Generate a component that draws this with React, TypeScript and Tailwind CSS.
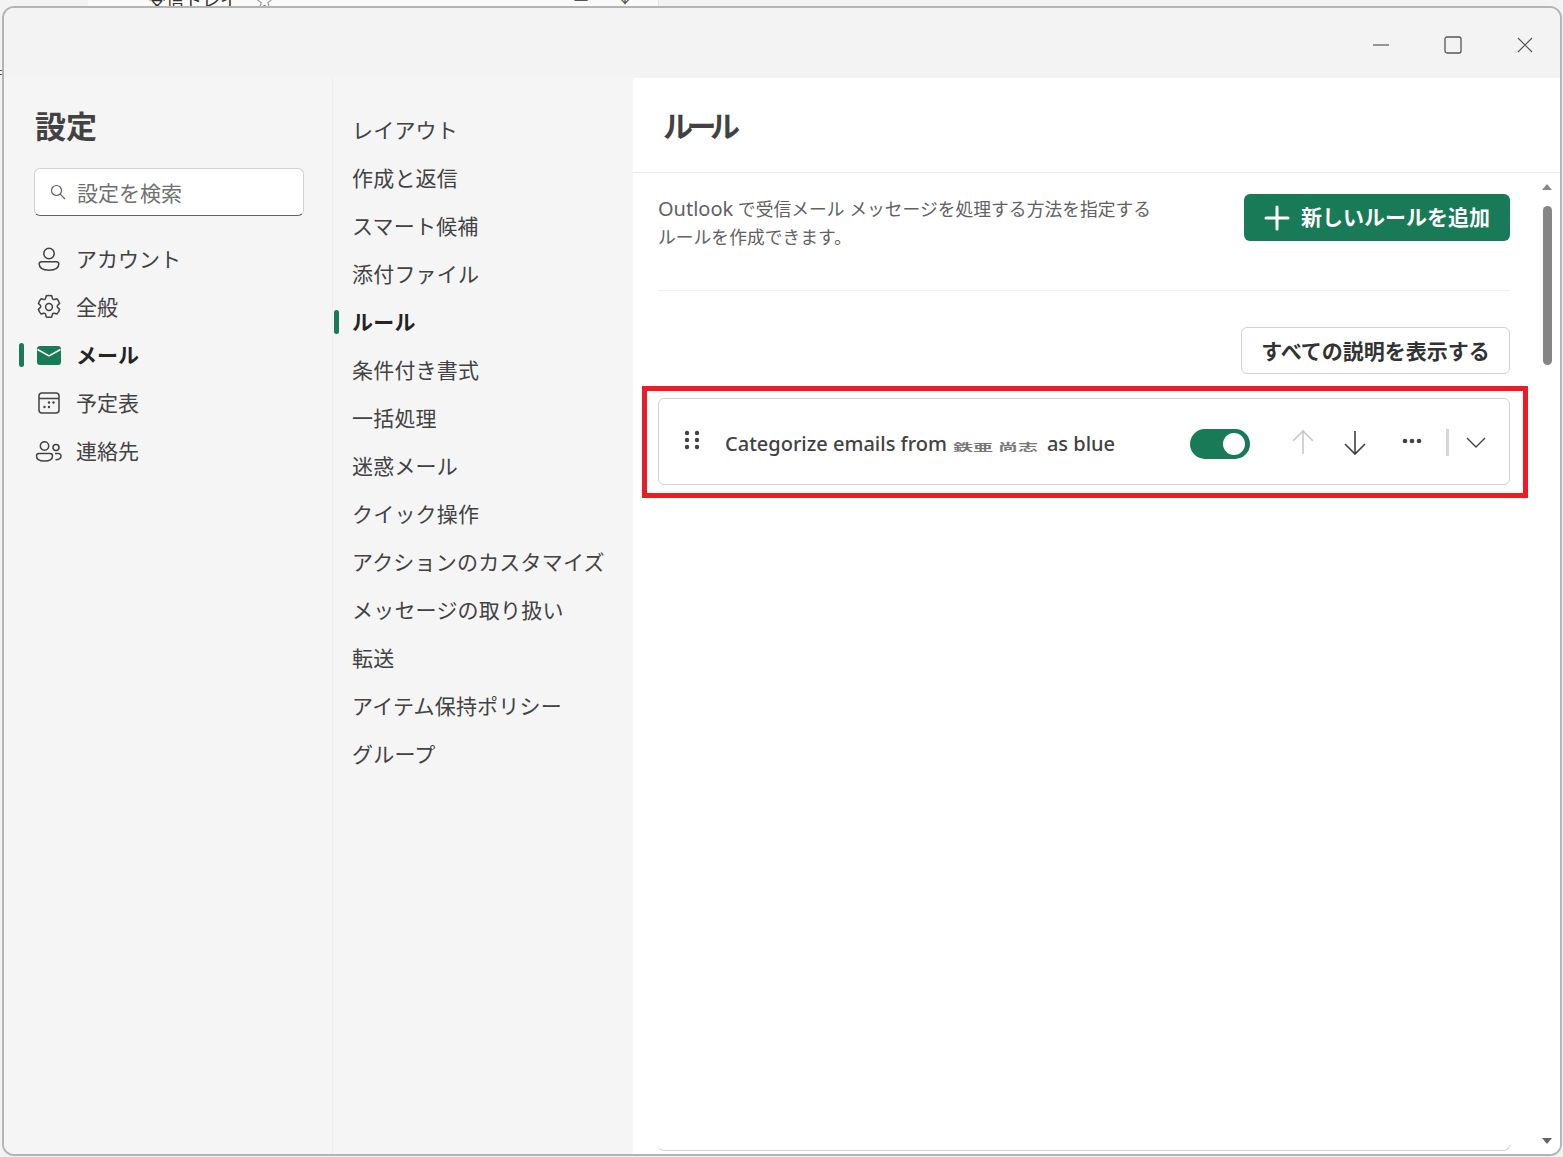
const font = "[font-family:'Noto_Sans','Noto_Sans_CJK_JP',sans-serif]";

function PersonIcon() {
  return (
    <svg width="26" height="26" viewBox="0 0 26 26" fill="none" stroke="#424242" strokeWidth="1.5">
      <circle cx="13" cy="7.5" r="5.2" />
      <path d="M5.5 15.7h15a2.3 2.3 0 0 1 2.3 2.3c0 4-3.8 6.2-9.8 6.2S3.2 22 3.2 18a2.3 2.3 0 0 1 2.3-2.3Z" />
    </svg>
  );
}

function GearIcon() {
  return (
    <svg width="26" height="26" viewBox="0 0 26 26" fill="none" stroke="#424242" strokeWidth="1.5" strokeLinejoin="round">
      <circle cx="13" cy="13" r="3.4" />
      <path d="M10.3 1.8c1.8-.4 3.6-.4 5.4 0l.7 2.6c.2.8 1.1 1.3 1.9 1.1l2.6-.7c1.2 1.3 2.1 2.9 2.7 4.6l-1.9 1.9c-.6.6-.6 1.6 0 2.2l1.9 1.9c-.6 1.7-1.5 3.3-2.7 4.6l-2.6-.7c-.8-.2-1.7.3-1.9 1.1l-.7 2.6c-1.8.4-3.6.4-5.4 0l-.7-2.6c-.2-.8-1.1-1.3-1.9-1.1l-2.6.7c-1.2-1.3-2.1-2.9-2.7-4.6l1.9-1.9c.6-.6.6-1.6 0-2.2L2.4 9.4c.6-1.7 1.5-3.3 2.7-4.6l2.6.7c.8.2 1.7-.3 1.9-1.1l.7-2.6Z" />
    </svg>
  );
}

function MailIcon() {
  return (
    <svg width="26" height="26" viewBox="0 0 26 26" fill="none">
      <rect x="1" y="4" width="24" height="19" rx="3" fill="#187a57" />
      <path d="M1.5 7.5 13 14l11.5-6.5" stroke="#fff" strokeWidth="1.5" />
    </svg>
  );
}

function CalendarIcon() {
  return (
    <svg width="26" height="26" viewBox="0 0 26 26" fill="none">
      <rect x="3" y="3" width="20" height="20" rx="3" stroke="#424242" strokeWidth="1.5" />
      <path d="M3 8.5h20" stroke="#424242" strokeWidth="1.5" />
      <g fill="#424242">
        <circle cx="13" cy="12.5" r="1.2" />
        <circle cx="17.5" cy="12.5" r="1.2" />
        <circle cx="8.5" cy="17" r="1.2" />
        <circle cx="13" cy="17" r="1.2" />
      </g>
    </svg>
  );
}

function PeopleIcon() {
  return (
    <svg width="28" height="26" viewBox="0 0 28 26" fill="none" stroke="#424242" strokeWidth="1.5">
      <circle cx="9.5" cy="8" r="4.2" />
      <circle cx="21" cy="9.5" r="3" />
      <path d="M4 15.5h11a2.5 2.5 0 0 1 2.5 2.5c0 3.4-3.2 5-8 5s-8-1.6-8-5A2.5 2.5 0 0 1 4 15.5Z" />
      <path d="M20 15.5h3.5a2.5 2.5 0 0 1 2.5 2.5c0 2.5-2.4 3.7-5.5 3.7" />
    </svg>
  );
}

const accounts = [
  { label: "アカウント", icon: PersonIcon },
  { label: "全般", icon: GearIcon },
  { label: "メール", icon: MailIcon, active: true },
  { label: "予定表", icon: CalendarIcon },
  { label: "連絡先", icon: PeopleIcon },
];

const mailSections = [
  "レイアウト",
  "作成と返信",
  "スマート候補",
  "添付ファイル",
  "ルール",
  "条件付き書式",
  "一括処理",
  "迷惑メール",
  "クイック操作",
  "アクションのカスタマイズ",
  "メッセージの取り扱い",
  "転送",
  "アイテム保持ポリシー",
  "グループ",
];

export default function App() {
  return (
    <div className={`${font} relative w-[1563px] h-[1157px] overflow-hidden bg-[#f3f3f3] pl-[2px] pt-[6px] pr-[1px] pb-px`}>
      {/* mailbox window peeking out behind the dialog */}
      <div className="absolute left-[88px] top-0 w-[571px] h-[6px] bg-[#fafafa] overflow-hidden border-r border-[#e0e0e0]">
        <span className="absolute left-[60px] -top-[14px] text-[18px] leading-[28px] text-[#333] whitespace-nowrap">受信トレイ</span>
        <span className="absolute left-[166px] -top-[14px] text-[21px] leading-[28px] text-[#777]">☆</span>
        <span className="absolute left-[484px] -top-[16px] text-[18px] leading-[24px] text-[#555]">≡</span>
        <span className="absolute left-[528px] -top-[16px] text-[18px] leading-[24px] text-[#555]">↓</span>
      </div>
      <span className="absolute left-0 top-[70px] w-[2px] h-[5px] border-y border-[#555]" />

      <div className="relative flex flex-col h-full border-2 border-[#b4b4b4] rounded-[12px] overflow-hidden bg-white">
        <div className="flex items-center justify-end h-[70px] pt-[4px] shrink-0 bg-[#f3f3f3]">
          <svg width="18" height="18" viewBox="0 0 18 18" fill="none" stroke="#777" strokeWidth="1.5" className="mr-[54px]">
            <path d="M1 9h16" />
          </svg>
          <svg width="18" height="18" viewBox="0 0 18 18" fill="none" stroke="#555" strokeWidth="1.3" className="mr-[54px]">
            <rect x="1" y="1" width="16" height="16" rx="2" />
          </svg>
          <svg width="18" height="18" viewBox="0 0 18 18" fill="none" stroke="#555" strokeWidth="1.2" className="mr-[26px]">
            <path d="M2 2l14 14M16 2 2 16" />
          </svg>
        </div>

        <div className="flex flex-1 min-h-0">
          <nav className="w-[329px] shrink-0 bg-[#f5f5f5] border-r border-[#eeeeee] pt-[25px]">
            <h1 className="pl-[31px] text-[31px] leading-[46px] font-bold text-[#424242]">設定</h1>
            <div className="ml-[30px] mt-[19px] flex items-center w-[270px] h-[48px] bg-white rounded-[6px] border border-[#d1d1d1] border-b-[#616161]">
              <svg width="16" height="16" viewBox="0 0 16 16" fill="none" stroke="#616161" strokeWidth="1.2" className="ml-[15px]">
                <circle cx="6.5" cy="6.5" r="5" />
                <path d="M10.2 10.2 15 15" />
              </svg>
              <span className="ml-[11px] mt-[1px] text-[21px] leading-[28px] text-[#707070]">設定を検索</span>
            </div>
            <ul className="mt-[19px]">
              {accounts.map((item) => (
                <li key={item.label} className="relative flex items-center h-[48px] pl-[31px]">
                  {item.active && (
                    <span className="absolute left-[15px] top-[12px] w-[5px] h-[24px] rounded-full bg-[#187a57]" />
                  )}
                  <span className="flex justify-center w-[28px]">
                    <item.icon />
                  </span>
                  <span
                    className={`ml-[13px] text-[21px] leading-[28px] ${
                      item.active ? "font-bold text-[#242424]" : "text-[#424242]"
                    }`}
                  >
                    {item.label}
                  </span>
                </li>
              ))}
            </ul>
          </nav>

          <ul className="w-[300px] shrink-0 bg-[#f5f5f5] pt-[28px]">
            {mailSections.map((label) => {
              const active = label === "ルール";
              return (
                <li key={label} className="relative flex items-center h-[48px] pl-[19px]">
                  {active && (
                    <span className="absolute left-px top-[12px] w-[5px] h-[24px] rounded-full bg-[#187a57]" />
                  )}
                  <span className={`text-[21px] leading-[28px] tracking-[0.2px] whitespace-nowrap ${active ? "font-bold text-[#242424]" : "text-[#424242]"}`}>
                    {label}
                  </span>
                </li>
              );
            })}
          </ul>

          <main className="flex-1 min-w-0 flex flex-col bg-white">
            <header className="h-[95px] shrink-0 border-b border-[#e8e8e8] pl-[30px] pt-[25px]">
              <h2 className="text-[30px] leading-[46px] font-bold text-[#424242] tracking-[-6.5px]">ルール</h2>
            </header>

            <div className="relative flex-1 min-h-0 flex flex-col pl-[25px] pr-[50px]">
              <div className="flex justify-between pt-[21px] pb-[39px] border-b border-[#f0f0f0]">
                <p className="mt-[1px] text-[17.8px] leading-[28px] text-[#616161] whitespace-nowrap">
                  <span className="text-[20px]">Outlook</span> で受信メール メッセージを処理する方法を指定する
                  <br />
                  ルールを作成できます。
                </p>
                <button className="flex items-center justify-center w-[266px] h-[47px] rounded-[6px] bg-[#187a57] text-white text-[21px] font-bold">
                  <svg width="26" height="26" viewBox="0 0 26 26" fill="none" stroke="#fff" strokeWidth="3" strokeLinecap="round" className="mr-[11px]">
                    <path d="M13 2v22M2 13h22" />
                  </svg>
                  新しいルールを追加
                </button>
              </div>

              <div className="flex justify-end mt-[36px]">
                <button className="w-[269px] h-[47px] pt-[2px] rounded-[6px] border border-[#d1d1d1] bg-white text-[21px] font-bold text-[#333]">
                  すべての説明を表示する
                </button>
              </div>

              <div className="relative flex items-center h-[87px] mt-[24px] pt-[4px] rounded-[6px] border border-[#d1d1d1]">
                <svg width="16" height="20" viewBox="0 0 16 20" fill="#424242" className="ml-[25px] -mt-[8px]">
                  <circle cx="3" cy="3" r="2.2" />
                  <circle cx="13" cy="3" r="2.2" />
                  <circle cx="3" cy="10" r="2.2" />
                  <circle cx="13" cy="10" r="2.2" />
                  <circle cx="3" cy="17" r="2.2" />
                  <circle cx="13" cy="17" r="2.2" />
                </svg>
                <span className="ml-[25px] flex items-center text-[20px] leading-[28px] font-medium text-[#424242] whitespace-nowrap">
                  Categorize emails from
                  <span className="inline-block mx-[6px] w-[88px] text-[20px] leading-[28px] font-bold text-[#777] scale-y-50 translate-y-[3px]">鉄亜 尚志</span>
                  as blue
                </span>

                <span className="ml-auto relative w-[60px] h-[30px] rounded-full bg-[#187a57]">
                  <span className="absolute right-[5px] top-[4px] w-[22px] h-[22px] rounded-full bg-white" />
                </span>
                <svg width="24" height="26" viewBox="0 0 24 26" fill="none" stroke="#c8c8c8" strokeWidth="1.6" className="ml-[41px] -mt-[4px]">
                  <path d="M12 25V2M2 12 12 2l10 10" />
                </svg>
                <svg width="24" height="26" viewBox="0 0 24 26" fill="none" stroke="#424242" strokeWidth="1.6" className="ml-[28px] -mt-[2px]">
                  <path d="M12 1v23M2 14l10 10 10-10" />
                </svg>
                <svg width="20" height="6" viewBox="0 0 20 6" fill="#424242" className="ml-[35px] -mt-[6px]">
                  <circle cx="3" cy="3" r="2.3" />
                  <circle cx="10" cy="3" r="2.3" />
                  <circle cx="17" cy="3" r="2.3" />
                </svg>
                <span className="ml-[24px] w-[3px] h-[27px] -mt-[2px] bg-[#d6d6d6]" />
                <svg width="20" height="12" viewBox="0 0 20 12" fill="none" stroke="#424242" strokeWidth="1.4" className="ml-[17px] mr-[23px] -mt-[2px]">
                  <path d="M1 1l9 9 9-9" />
                </svg>

                {/* red call-out drawn on top of the screenshot */}
                <span className="absolute -left-[17px] -right-[19px] -top-[13px] -bottom-[14px] border-[5px] border-[#ed1c24] pointer-events-none" />
              </div>

              <div className="mt-auto mb-[3px] h-[6px] rounded-b-[6px] border-b border-r border-[#d1d1d1]" />

              <div className="absolute right-[8px] top-[11px] bottom-[10px] flex flex-col items-center w-[10px]">
                <span className="w-0 h-0 border-x-[5px] border-x-transparent border-b-[6px] border-b-[#888]" />
                <span className="mt-[16px] w-[9px] h-[159px] rounded-full bg-[#858585]" />
                <span className="mt-auto w-0 h-0 border-x-[5px] border-x-transparent border-t-[6px] border-t-[#666]" />
              </div>
            </div>
          </main>
        </div>
      </div>
    </div>
  );
}
